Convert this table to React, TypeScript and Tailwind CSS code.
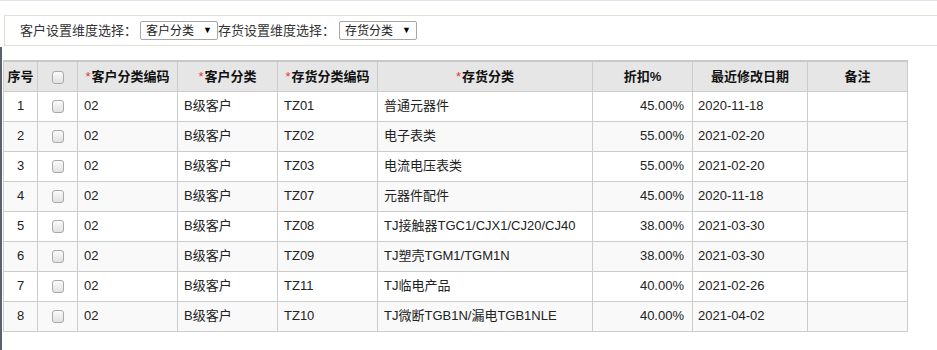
const rows = [
  ['1', '02', 'B级客户', 'TZ01', '普通元器件', '45.00%', '2020-11-18'],
  ['2', '02', 'B级客户', 'TZ02', '电子表类', '55.00%', '2021-02-20'],
  ['3', '02', 'B级客户', 'TZ03', '电流电压表类', '55.00%', '2021-02-20'],
  ['4', '02', 'B级客户', 'TZ07', '元器件配件', '45.00%', '2020-11-18'],
  ['5', '02', 'B级客户', 'TZ08', 'TJ接触器TGC1/CJX1/CJ20/CJ40', '38.00%', '2021-03-30'],
  ['6', '02', 'B级客户', 'TZ09', 'TJ塑壳TGM1/TGM1N', '38.00%', '2021-03-30'],
  ['7', '02', 'B级客户', 'TZ11', 'TJ临电产品', '40.00%', '2021-02-26'],
  ['8', '02', 'B级客户', 'TZ10', 'TJ微断TGB1N/漏电TGB1NLE', '40.00%', '2021-04-02'],
]

const font = "font-['Liberation_Sans','Noto_Sans_CJK_SC',sans-serif]"

function Checkbox() {
  return (
    <span className="inline-block w-[12px] h-[13px] rounded-[3px] border border-[#a9a9a9] bg-gradient-to-b from-[#fafafa] to-[#e2e2e2] align-middle"></span>
  )
}

function Select({ label }: { label: string }) {
  return (
    <div className="flex items-center justify-between w-[78px] h-[19px] border border-[#a6a6a6] rounded-[2px] bg-white pl-[5px] pr-[5px] text-[12px] text-[#222]">
      <span>{label}</span>
      <span className="text-[9px] text-black">▼</span>
    </div>
  )
}

function Star() {
  return <span className="text-[#e4393c] font-normal mr-[1px]">*</span>
}

export default function App() {
  return (
    <div className={`relative w-[937px] h-[350px] overflow-hidden bg-white border-t border-[#e3e3e3] ${font}`}>
      <div className="absolute left-0 top-[46px] bottom-0 w-[2px] bg-[#5c6168]"></div>

      {/* filter bar */}
      <div className="mt-[14px] ml-[4px] h-[31px] border border-r-0 border-[#e0ddd5] flex items-center pl-[15px] text-[13px] text-[#333]">
        <span className="mr-[3px]">客户设置维度选择：</span>
        <Select label="客户分类" />
        <span className="mr-[4px]">存货设置维度选择：</span>
        <Select label="存货分类" />
      </div>

      {/* grid */}
      <table className="mt-[14px] ml-[3px] border-collapse table-fixed w-[904px] text-[13px] text-[#222]">
        <colgroup>
          <col className="w-[34px]" />
          <col className="w-[40px]" />
          <col className="w-[100px]" />
          <col className="w-[100px]" />
          <col className="w-[100px]" />
          <col className="w-[215px]" />
          <col className="w-[100px]" />
          <col className="w-[115px]" />
          <col className="w-[100px]" />
        </colgroup>
        <thead>
          <tr className="h-[30px] bg-[#e6e6e6] text-[13px] font-bold text-[#111]">
            <th className="border border-[#cccccc] border-t-[#c8c8c8] border-t-2 p-0">序号</th>
            <th className="border border-[#cccccc] border-t-[#c8c8c8] border-t-2 p-0"><Checkbox /></th>
            <th className="border border-[#cccccc] border-t-[#c8c8c8] border-t-2 p-0"><Star />客户分类编码</th>
            <th className="border border-[#cccccc] border-t-[#c8c8c8] border-t-2 p-0"><Star />客户分类</th>
            <th className="border border-[#cccccc] border-t-[#c8c8c8] border-t-2 p-0"><Star />存货分类编码</th>
            <th className="border border-[#cccccc] border-t-[#c8c8c8] border-t-2 p-0"><Star />存货分类</th>
            <th className="border border-[#cccccc] border-t-[#c8c8c8] border-t-2 p-0">折扣%</th>
            <th className="border border-[#cccccc] border-t-[#c8c8c8] border-t-2 p-0">最近修改日期</th>
            <th className="border border-[#cccccc] border-t-[#c8c8c8] border-t-2 p-0">备注</th>
          </tr>
        </thead>
        <tbody>
          {rows.map((r, i) => (
            <tr key={r[0]} className={`h-[30px] ${i % 2 === 1 ? 'bg-[#f9f9f9]' : 'bg-white'}`}>
              <td className="border border-[#cccccc] text-center p-0">{r[0]}</td>
              <td className="border border-[#cccccc] text-center p-0"><Checkbox /></td>
              <td className="border border-[#cccccc] px-[6px] py-0">{r[1]}</td>
              <td className="border border-[#cccccc] px-[6px] py-0">{r[2]}</td>
              <td className="border border-[#cccccc] px-[6px] py-0">{r[3]}</td>
              <td className="border border-[#cccccc] px-[6px] py-0 whitespace-nowrap">{r[4]}</td>
              <td className="border border-[#cccccc] pr-[8px] py-0 text-right">{r[5]}</td>
              <td className="border border-[#cccccc] px-[5px] py-0">{r[6]}</td>
              <td className="border border-[#cccccc] p-0"></td>
            </tr>
          ))}
        </tbody>
      </table>
    </div>
  )
}
